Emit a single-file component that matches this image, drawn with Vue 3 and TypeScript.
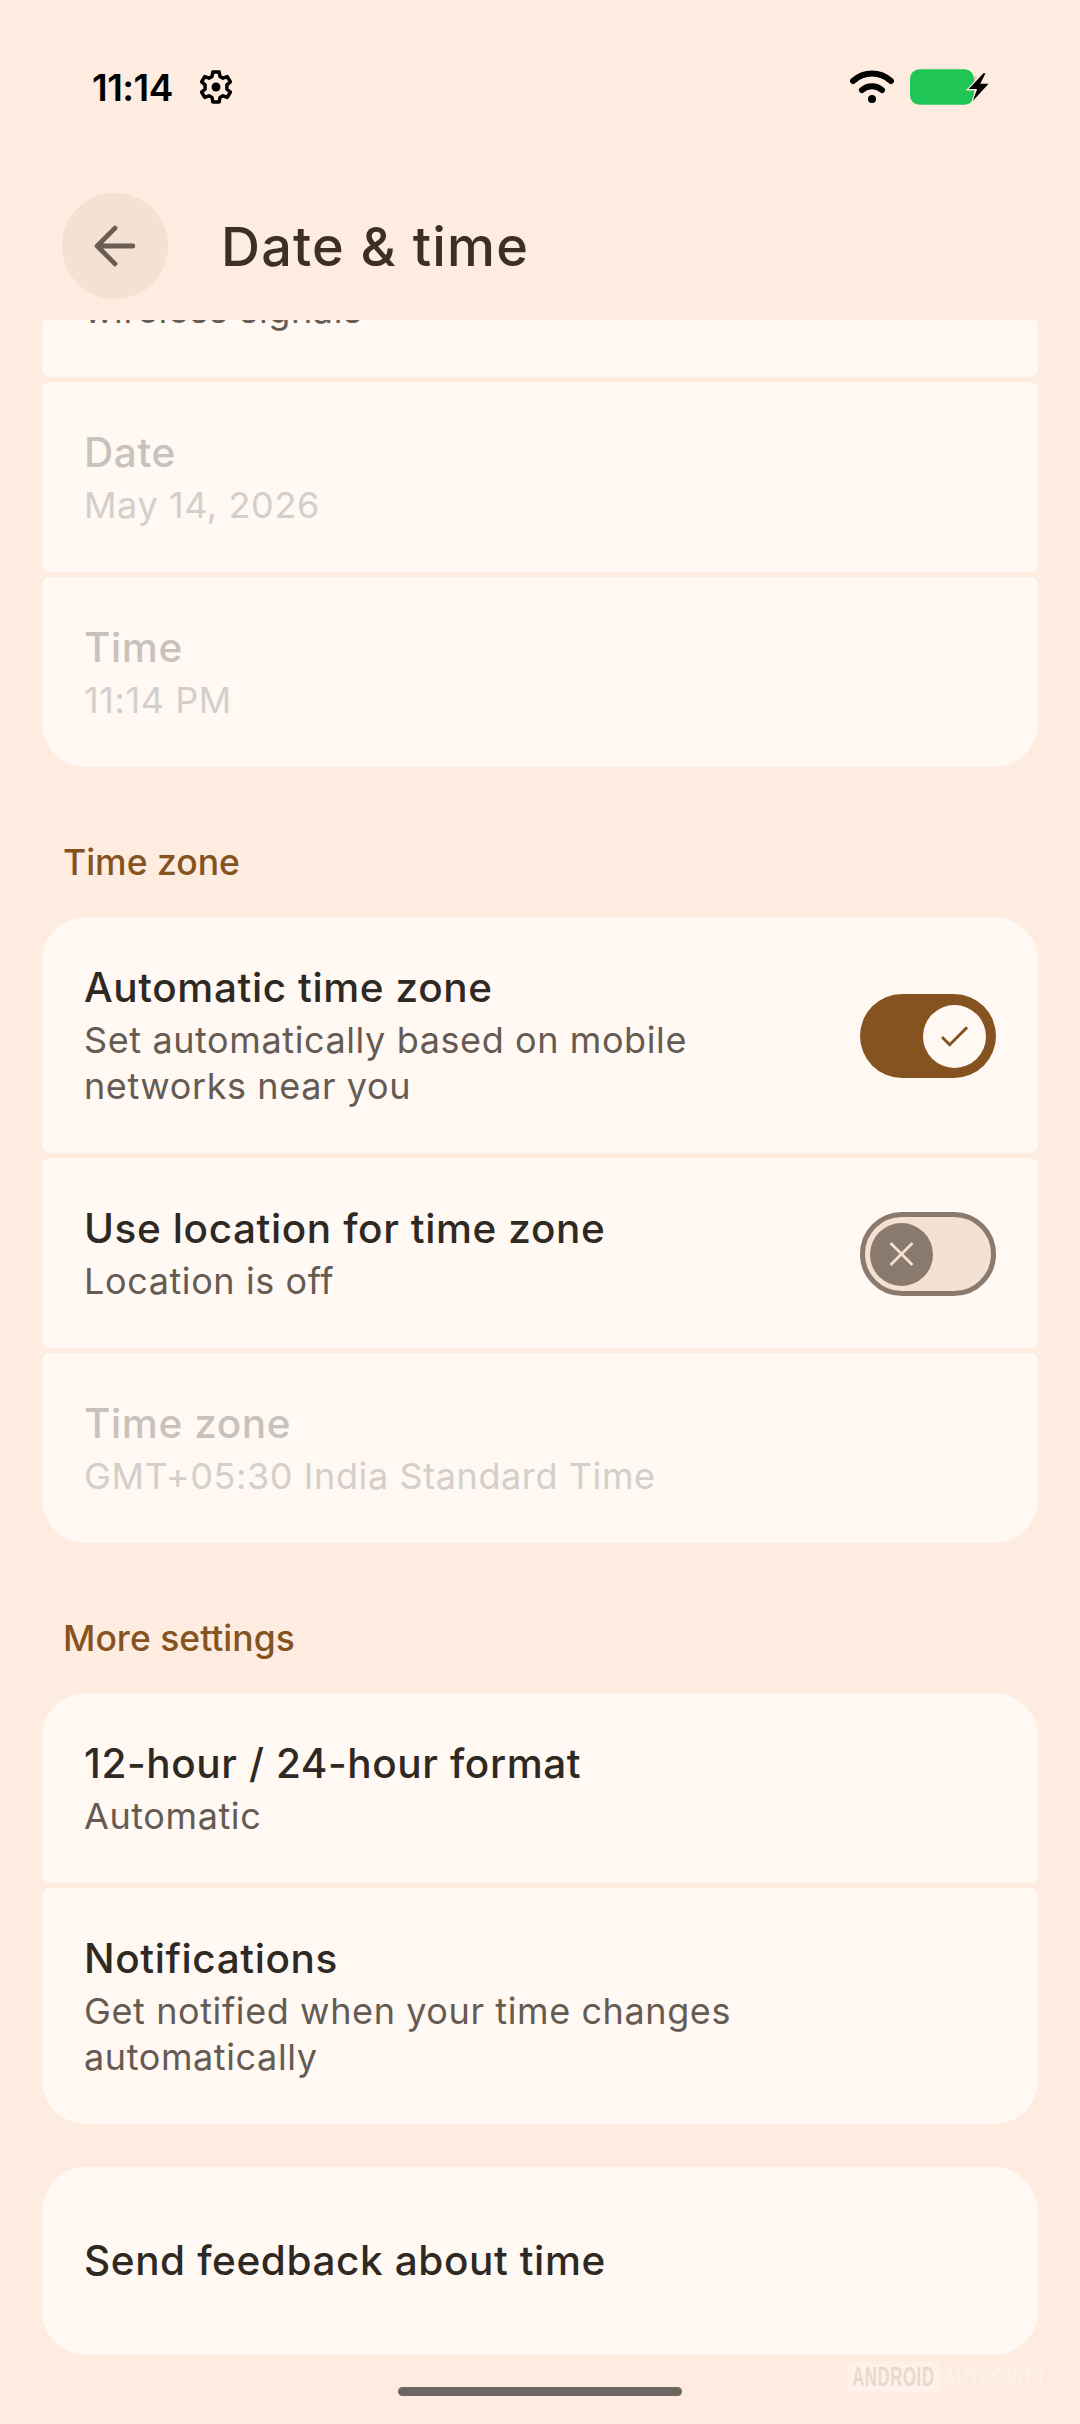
<script setup lang="ts">
interface Row {
  title: string
  sub?: string
  dim?: boolean
  toggle?: 'on' | 'off'
}

const topRows: Row[] = [
  { title: 'Date', sub: 'May 14, 2026', dim: true },
  { title: 'Time', sub: '11:14 PM', dim: true },
]
const zoneRows: Row[] = [
  { title: 'Automatic time zone', sub: 'Set automatically based on mobile\nnetworks near you', toggle: 'on' },
  { title: 'Use location for time zone', sub: 'Location is off', toggle: 'off' },
  { title: 'Time zone', sub: 'GMT+05:30 India Standard Time', dim: true },
]
const moreRows: Row[] = [
  { title: '12-hour / 24-hour format', sub: 'Automatic' },
  { title: 'Notifications', sub: 'Get notified when your time changes\nautomatically' },
]
</script>

<template>
  <div class="screen">
    <div class="status">
      <div class="status-left">
        <span class="clock">11:14</span>
        <svg class="gear" viewBox="0 0 24 24" fill="none" stroke="#000" stroke-width="2.2" stroke-linejoin="round">
          <path d="M10 2.500h4l.5 2.800 1.900 1.100 2.700-1 2 3.400-2.200 1.800v2.800l2.200 1.800-2 3.400-2.700-1-1.900 1.100-.5 2.800h-4l-.5-2.800-1.900-1.100-2.700 1-2-3.400 2.200-1.800v-2.800l-2.200-1.800 2-3.400 2.700 1 1.900-1.100z" />
          <circle cx="12" cy="12" r="2.800" fill="#000" stroke="none" />
        </svg>
      </div>
      <div class="status-right">
        <svg class="wifi" viewBox="0 0 44 34" fill="none" stroke="#000" stroke-width="6" stroke-linecap="round">
          <path d="M3 11C14 1 30 1 41 11" />
          <path d="M12 20C18 15 26 15 32 20" />
          <circle cx="22" cy="29" r="4" fill="#000" stroke="none" />
        </svg>
        <svg class="battery" viewBox="0 0 82 36">
          <rect x="0" y="1" width="61" height="34" rx="9" fill="#1fc655" />
          <path d="M61 8h3v20h-3z" fill="#d9cdbf" />
          <path d="M70 5 56 20h8l-4 11 15-16h-8l5-10z" fill="#000" stroke="#fdecdf" stroke-width="2.500" paint-order="stroke" />
        </svg>
      </div>
    </div>

    <div class="appbar">
      <div class="back">
        <svg viewBox="0 0 40 40" fill="none" stroke="#6b5d52" stroke-width="4.600" stroke-linecap="round" stroke-linejoin="round">
          <path d="M37 20H3M20 3 3 20l17 17" />
        </svg>
      </div>
      <h1 class="title">Date &amp; time</h1>
    </div>

    <div class="scroller">
      <div class="group clipped">
        <div class="row first-row">
          <div class="sub">wireless signals</div>
        </div>
        <div v-for="r in topRows" :key="r.title" class="row" :class="{ dim: r.dim }">
          <div class="text">
            <div class="name">{{ r.title }}</div>
            <div class="sub">{{ r.sub }}</div>
          </div>
        </div>
      </div>

      <div class="heading">Time zone</div>
      <div class="group">
        <div v-for="r in zoneRows" :key="r.title" class="row" :class="{ dim: r.dim }">
          <div class="text">
            <div class="name">{{ r.title }}</div>
            <div class="sub">{{ r.sub }}</div>
          </div>
          <div v-if="r.toggle === 'on'" class="switch on">
            <span class="thumb">
              <svg viewBox="0 0 28 22" fill="none" stroke="#85531f" stroke-width="3"><path d="M1 12l8 8L27 2" /></svg>
            </span>
          </div>
          <div v-else-if="r.toggle === 'off'" class="switch off">
            <span class="thumb">
              <svg viewBox="0 0 24 24" fill="none" stroke="#f3e1d3" stroke-width="2.800"><path d="M1 1l22 22M23 1 1 23" /></svg>
            </span>
          </div>
        </div>
      </div>

      <div class="heading">More settings</div>
      <div class="group">
        <div v-for="r in moreRows" :key="r.title" class="row">
          <div class="text">
            <div class="name">{{ r.title }}</div>
            <div class="sub">{{ r.sub }}</div>
          </div>
        </div>
      </div>

      <div class="group feedback">
        <div class="row single"><div class="name">Send feedback about time</div></div>
      </div>
    </div>

    <div class="home"></div>

    <div class="watermark">
      <span class="wm-box">ANDROID</span>
      <span class="wm-text">AUTHORITY</span>
    </div>
  </div>
</template>

<style>
html,
body {
  margin: 0;
  background: #fdecdf;
}
</style>

<style scoped>
.screen {
  position: relative;
  width: 1080px;
  height: 2424px;
  display: flex;
  flex-direction: column;
  background: #fdecdf;
  font-family: Inter, "Open Sans", sans-serif;
  overflow: hidden;
}

.status {
  height: 44px;
  padding: 65px 92px 0;
  display: flex;
  justify-content: space-between;
  align-items: center;
}
.status-left {
  display: flex;
  align-items: center;
  gap: 24px;
}
.clock {
  font-size: 37px;
  font-weight: 600;
  letter-spacing: -0.500px;
  color: #000;
}
.gear {
  width: 38px;
  height: 38px;
}
.status-right {
  display: flex;
  align-items: center;
  gap: 16px;
  margin-right: -8px;
}
.wifi {
  width: 44px;
  height: 34px;
}
.battery {
  width: 86px;
  height: 38px;
}

.appbar {
  height: 106px;
  margin-top: 84px;
  padding-left: 62px;
  display: flex;
  align-items: center;
  gap: 53px;
}
.back {
  width: 106px;
  height: 106px;
  border-radius: 50%;
  background: #f3e1d3;
  display: flex;
  align-items: center;
  justify-content: center;
}
.back svg {
  width: 42px;
  height: 42px;
}
.title {
  margin: 0;
  font-size: 54px;
  font-weight: 500;
  letter-spacing: 1.200px;
  color: #3b2f26;
}

.scroller {
  height: 2060px;
  margin-top: 21px;
  overflow: hidden;
  flex: none;
}

.group {
  margin: 0 42px;
  display: flex;
  flex-direction: column;
  gap: 5px;
  border-radius: 44px;
  overflow: hidden;
}
.clipped {
  margin-top: -33px;
}
.row {
  background: #fff8f3;
  border-radius: 8px;
  padding: 46px 42px 44px;
  display: flex;
  align-items: center;
  justify-content: space-between;
}
.first-row {
  height: 90px;
  padding: 0 42px;
  align-items: flex-start;
}
.name {
  font-size: 40.500px;
  font-weight: 450;
  letter-spacing: 0.600px;
  line-height: 50px;
  color: #2f2923;
}
.sub {
  margin-top: 4px;
  font-size: 36px;
  letter-spacing: 0.600px;
  line-height: 46px;
  color: #665b52;
  white-space: pre-line;
}
.first-row .sub {
  margin-top: 0;
}
.dim .name {
  color: #c8c2bd;
}
.dim .sub {
  color: #d4cfca;
}

.heading {
  margin: 70px 63px 0;
  height: 80px;
  font-size: 35.500px;
  font-weight: 500;
  line-height: 52px;
  color: #85531f;
}

.switch {
  width: 136px;
  height: 84px;
  box-sizing: border-box;
  border-radius: 42px;
  display: flex;
  align-items: center;
  flex: none;
}
.switch.on {
  background: #85531f;
  justify-content: flex-end;
  padding-right: 10px;
}
.switch.on .thumb {
  background: #fff8f3;
}
.switch.off {
  background: #f3e1d3;
  border: 5px solid #8a7a6e;
  padding-left: 5px;
}
.switch.off .thumb {
  background: #8a7a6e;
}
.thumb {
  width: 63px;
  height: 63px;
  border-radius: 50%;
  display: flex;
  align-items: center;
  justify-content: center;
}
.thumb svg {
  width: 27px;
  height: 24px;
}

.feedback {
  margin-top: 43px;
}
.single {
  padding: 69px 42px;
}

.home {
  width: 284px;
  height: 9px;
  margin: 7px auto 0;
  border-radius: 5px;
  background: #6e6660;
}

.watermark {
  position: absolute;
  right: 34px;
  top: 2362px;
  display: flex;
  align-items: center;
  gap: 6px;
  font-family: "Liberation Sans", sans-serif;
  font-size: 27px;
  font-weight: 700;
  letter-spacing: 1px;
  transform: scaleX(0.62);
  transform-origin: right center;
}
.wm-box {
  background: #fff1e9;
  color: #e8d8ce;
  padding: 0 8px;
  border-radius: 2px;
}
.wm-text {
  color: #fff1e9;
}
</style>
